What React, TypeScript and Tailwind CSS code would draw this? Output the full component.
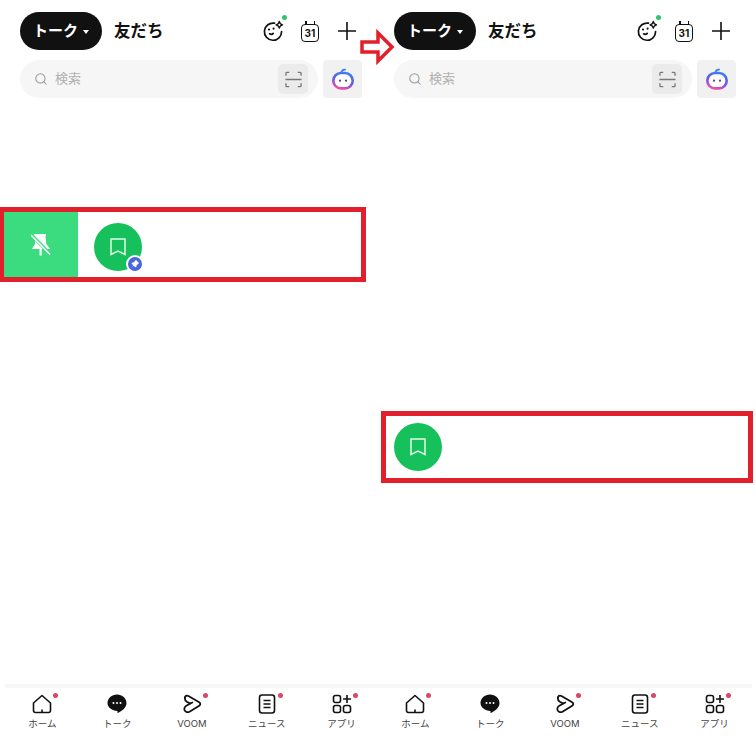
import { Search } from "lucide-react";

const FONT = "font-['Inter','Noto_Sans_CJK_JP',sans-serif]";

function FaceIcon() {
  return (
    <svg viewBox="0 0 24 24" className="h-6 w-6 text-[#111]" fill="none" stroke="currentColor" strokeWidth="1.700" strokeLinecap="round">
      <path d="M13.500 4.200A8.600 8.600 0 1 0 20.600 12.500" />
      <circle cx="8" cy="10.500" r="1.100" fill="currentColor" stroke="none" />
      <circle cx="12.600" cy="9.600" r="1.100" fill="currentColor" stroke="none" />
      <path d="M8.600 14.800c1.200.8 2.800.6 3.600-.4" />
      <path d="M18.300 2.400c.4 2.300 1.100 3 3.300 3.400-2.200.4-2.900 1.100-3.300 3.400-.4-2.300-1.100-3-3.300-3.400 2.200-.4 2.900-1.100 3.300-3.400Z" strokeWidth="1.300" strokeLinejoin="round" />
    </svg>
  );
}

function CalendarIcon() {
  return (
    <div className="relative flex h-[21px] w-[18px] items-end">
      <span className="absolute left-[4px] top-0 h-[4px] w-[1.500px] bg-[#111]" />
      <span className="absolute right-[4px] top-0 h-[4px] w-[1.500px] bg-[#111]" />
      <div className="flex h-[18px] w-full items-center justify-center rounded-[4px] border-[1.600px] border-[#111] bg-white text-[10px] font-bold leading-none text-[#111]">
        31
      </div>
    </div>
  );
}

function PlusIcon() {
  return (
    <svg viewBox="0 0 20 20" className="h-5 w-5" fill="none" stroke="#111" strokeWidth="1.600">
      <path d="M10 1v18M1 10h18" />
    </svg>
  );
}

function ScanIcon() {
  return (
    <svg viewBox="0 0 18 18" className="h-[17px] w-[17px]" fill="none" stroke="#777" strokeWidth="1.400">
      <path d="M1 5V2.500A1 1 0 0 1 2 1.500h2.500M13.500 1.500H16a1 1 0 0 1 1 1V5M1 13v2.500a1 1 0 0 0 1 1h2.500M13.500 16.500H16a1 1 0 0 0 1-1V13M0.500 9h17" />
    </svg>
  );
}

function AiIcon({ id }: { id: string }) {
  return (
    <svg viewBox="0 0 24 24" className="h-[24px] w-[24px]" fill="none">
      <defs>
        <linearGradient id={id} x1="0.700" y1="0" x2="0.300" y2="1">
          <stop offset="0" stopColor="#3f7df0" />
          <stop offset="0.550" stopColor="#6a55e8" />
          <stop offset="1" stopColor="#ef4fa8" />
        </linearGradient>
      </defs>
      <rect x="2.300" y="6" width="19.400" height="15.400" rx="7.700" stroke={`url(#${id})`} strokeWidth="2.600" fill="#fff" />
      <path d="M10.500 5c.6-1.800 2-2.600 3.600-2.300" stroke="#3f7df0" strokeWidth="1.800" strokeLinecap="round" />
      <circle cx="9" cy="13.700" r="1.100" fill="#3b4a8c" />
      <circle cx="15" cy="13.700" r="1.100" fill="#3b4a8c" />
    </svg>
  );
}

function BookmarkIcon() {
  return (
    <svg viewBox="0 0 16 18" className="h-[18px] w-4" fill="none" stroke="#e4f8eb" strokeWidth="1.500">
      <path d="M1 1h14v15.500l-7-3.500-7 3.500V1Z" />
    </svg>
  );
}

function PinOffIcon() {
  return (
    <svg viewBox="0 0 20 22" className="h-[22px] w-5" fill="#fff">
      <path d="M3 0h12l-.5 3 .8 7 4 5H1l3-5-.2-6L3 0Z" />
      <path d="M8.500 15h2.200v6.500H8.500Z" />
      <path d="M-1 -.5 19 20" stroke="#3bdc80" strokeWidth="3.400" />
      <path d="M0 1 19 20.500" stroke="#fff" strokeWidth="1.600" />
    </svg>
  );
}

function SmallPin() {
  return (
    <svg viewBox="0 0 12 12" className="h-[10px] w-[10px]" fill="#fff">
      <path d="M7 1l4 4-1.200.6-2 2.200-.2 1.700-1 .5L4.300 8 1.500 10.500 4 7.700 1.900 5.400l.6-1 1.700-.2 2.200-2L7 1Z" />
    </svg>
  );
}

function HomeIcon() {
  return (
    <svg viewBox="0 0 20 20" className="h-5 w-5" fill="none" stroke="#111" strokeWidth="1.600" strokeLinejoin="round">
      <path d="M10 1.500 18.500 9v7.500a2 2 0 0 1-2 2h-13a2 2 0 0 1-2-2V9L10 1.500Z" />
      <path d="M10 15.500v3" />
    </svg>
  );
}

function TalkIcon() {
  return (
    <svg viewBox="0 0 20 20" className="h-5 w-5">
      <path d="M10 0.500c5.300 0 9.500 3.700 9.500 8.500 0 3.800-3 6.900-7.700 9.600-1 .6-1.500.3-1.400-.6l.1-1.100C5 16.800.5 13.500.5 9 .5 4.200 4.700.500 10 .500Z" fill="#111" />
      <circle cx="6.500" cy="9" r="1" fill="#fff" />
      <circle cx="10" cy="9" r="1" fill="#fff" />
      <circle cx="13.500" cy="9" r="1" fill="#fff" />
    </svg>
  );
}

function VoomIcon() {
  return (
    <svg viewBox="0 0 20 20" className="h-5 w-5" fill="none" stroke="#111" strokeWidth="1.800" strokeLinejoin="round" strokeLinecap="round">
      <path d="M2.800 4c0-2 1.900-3 3.600-2l10.800 6.200c1.400.8 1.400 2.800 0 3.600L7.500 17.700c-2.400 1.300-5.200-.2-5.200-2.800 0-1.400.8-2.500 2-3.200l6-3.200" />
      <path d="M2.800 4c0 1.700.7 2.900 2 3.700L8 9.400" />
    </svg>
  );
}

function NewsIcon() {
  return (
    <svg viewBox="0 0 20 20" className="h-5 w-5" fill="none" stroke="#111" strokeWidth="1.600">
      <rect x="2.500" y="1" width="15" height="18" rx="2.500" />
      <path d="M6.500 6.500h7M6.500 10h7M6.500 13.500h7" />
    </svg>
  );
}

function AppsIcon() {
  return (
    <svg viewBox="0 0 20 20" className="h-5 w-5" fill="none" stroke="#111" strokeWidth="1.600">
      <rect x="1.500" y="1.500" width="7" height="7" rx="2" />
      <rect x="1.500" y="11.500" width="7" height="7" rx="2" />
      <rect x="11.500" y="11.500" width="7" height="7" rx="2" />
      <path d="M15 1v8M11 5h8" />
    </svg>
  );
}

const tabs = [
  { label: "ホーム", Icon: HomeIcon, dot: true },
  { label: "トーク", Icon: TalkIcon, dot: false },
  { label: "VOOM", Icon: VoomIcon, dot: true },
  { label: "ニュース", Icon: NewsIcon, dot: true },
  { label: "アプリ", Icon: AppsIcon, dot: true },
];

function Phone({ pinned }: { pinned: boolean }) {
  return (
    <div className="flex h-full w-[374px] shrink-0 flex-col">
      <div className="mt-[12px] flex h-[38px] items-center pl-[20px] pr-[17px]">
        <div className="flex h-[38px] w-[82px] items-center justify-center gap-[5px] rounded-full bg-[#111] text-[15px] font-bold text-white">
          トーク
          <span className="mt-[1px] h-0 w-0 border-x-[3px] border-t-[4px] border-x-transparent border-t-white" />
        </div>
        <span className="ml-[12px] text-[16.500px] font-bold text-[#111]">友だち</span>
        <div className="ml-auto flex items-center gap-[16px]">
          <div className="relative">
            <FaceIcon />
            <span className="absolute -right-[2px] -top-[4px] h-[5px] w-[5px] rounded-full bg-[#2fc46c]" />
          </div>
          <CalendarIcon />
          <div className="ml-[2px]">
            <PlusIcon />
          </div>
        </div>
      </div>
      <div className="mt-[10px] flex h-[38px] items-center gap-[5px] pl-[20px]">
        <div className="flex h-[38px] w-[298px] items-center rounded-full bg-[#f6f6f6] pl-[14px] pr-[10px]">
          <Search className="h-[14px] w-[14px] text-[#9a9a9a]" strokeWidth={1.800} />
          <span className="ml-[7px] text-[13px] text-[#b0b0b0]">検索</span>
          <div className="ml-auto flex h-[30px] w-[30px] items-center justify-center rounded-[5px] bg-[#ebebeb]">
            <ScanIcon />
          </div>
        </div>
        <div className="flex h-[38px] w-[39px] items-center justify-center rounded-[4px] bg-[#f1f1f1]">
          <AiIcon id={pinned ? "aiGradLeft" : "aiGradRight"} />
        </div>
      </div>
      <div className="flex-1">
        {pinned ? (
          <div className="mt-[109px] flex h-[75px] w-[366px] items-stretch border-y-[5px] border-l-[4px] border-r-[5px] border-[#e1202c] bg-white">
            <div className="flex w-[74px] items-center justify-center bg-[#3bdc80]">
              <PinOffIcon />
            </div>
            <div className="relative ml-[16px] mt-[4px] flex h-12 w-12 items-center justify-center self-center rounded-full bg-[#16c05a]">
              <BookmarkIcon />
              <span className="absolute -bottom-[2px] -right-[2px] flex h-[18px] w-[18px] items-center justify-center rounded-full border-2 border-white bg-[#4a66d9]">
                <SmallPin />
              </span>
            </div>
          </div>
        ) : (
          <div className="ml-[7px] mt-[313px] flex h-[72px] w-[372px] items-center border-[5px] border-[#e1202c] bg-white pl-[8px]">
            <div className="flex h-12 w-12 items-center justify-center rounded-full bg-[#16c05a]">
              <BookmarkIcon />
            </div>
          </div>
        )}
      </div>
      <div className={`h-[4px] w-[374px] bg-[#f7f7f7] ${pinned ? "ml-[5px]" : "ml-[4px]"}`} />
      <div className={`flex h-[48px] w-[374px] ${pinned ? "ml-[5px]" : "ml-[4px]"}`}>
        {tabs.map(({ label, Icon, dot }) => (
          <div key={label} className="flex w-[74.800px] flex-col items-center pt-[6px]">
            <div className="relative">
              <Icon />
              {dot && <span className="absolute -right-[6px] -top-[1px] h-[5px] w-[5px] rounded-full bg-[#d5476b]" />}
            </div>
            <span className="mt-[4px] text-[9.500px] leading-[12px] text-[#444]">{label}</span>
          </div>
        ))}
      </div>
    </div>
  );
}

export default function App() {
  return (
    <div className={`relative flex h-[736px] w-[756px] overflow-hidden bg-white ${FONT}`}>
      <Phone pinned />
      <Phone pinned={false} />
      <svg viewBox="0 0 36 36" className="absolute left-[360px] top-[29px] h-[36px] w-[36px]" fill="#fff" stroke="#e1202c" strokeWidth="3.500">
        <path d="M2 13h16V4l14 14-14 14v-9H2Z" />
      </svg>
    </div>
  );
}
